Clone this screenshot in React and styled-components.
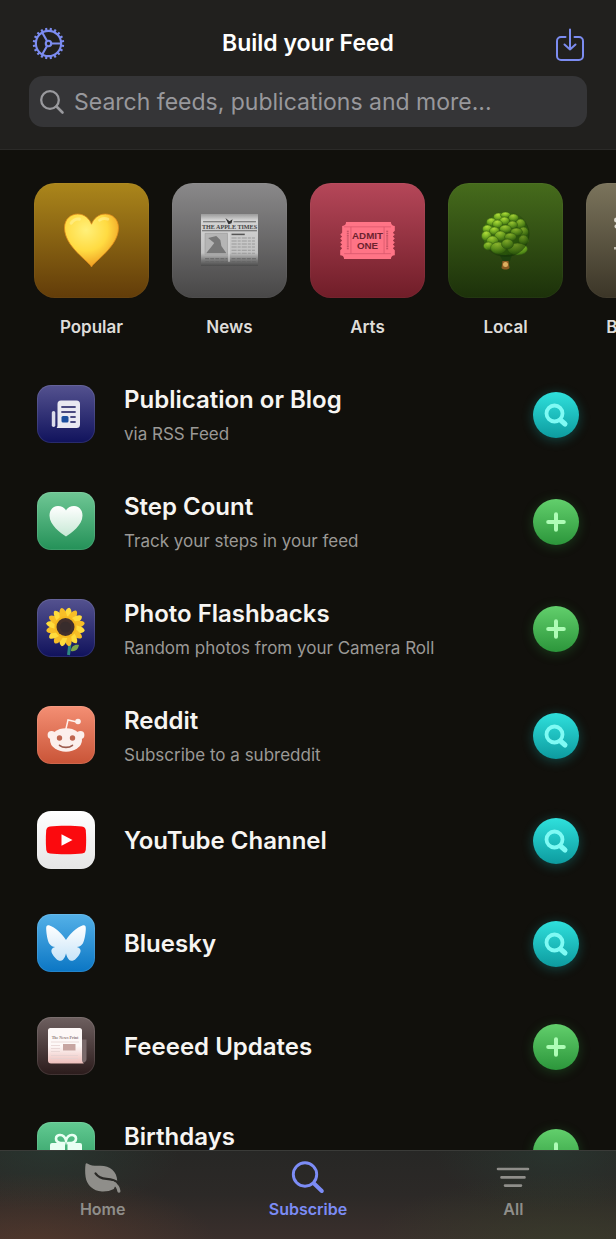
import React from "react";
import styled, { createGlobalStyle } from "styled-components";

const GlobalStyle = createGlobalStyle`
  * { box-sizing: border-box; }
  body { margin: 0; background: #11100c; }
  button, input { font: inherit; }
`;

const Screen = styled.div`
  height: 100vh;
  display: flex;
  flex-direction: column;
  background: #11100c;
  color: #f7f5f2;
  font-family: Inter, "Liberation Sans", sans-serif;
`;

const Header = styled.header`
  flex: none;
  padding: 24px 29px 22px;
  background: #21201e;
  border-bottom: 1px solid #2b2a28;
`;

const TitleBar = styled.div`
  display: flex;
  align-items: center;
  justify-content: space-between;
  height: 38px;
  padding: 0 3px;
  margin-bottom: 14px;
`;

const PageTitle = styled.h1`
  margin: 0;
  font-size: 23px;
  line-height: 30px;
  font-weight: 600;
  color: #ffffff;
`;

const IconButton = styled.button`
  display: flex;
  align-items: center;
  justify-content: ${(p) => p.$align || "center"};
  width: 34px;
  height: 38px;
  padding: 0;
  border: 0;
  background: none;
  color: #7c8cf0;
`;

const SearchBox = styled.label`
  display: flex;
  align-items: center;
  gap: 9px;
  height: 51px;
  padding: 0 10px;
  border-radius: 14px;
  background: #353537;
  color: #9a9a9e;
`;

const SearchInput = styled.input`
  flex: 1;
  min-width: 0;
  padding: 0;
  border: 0;
  outline: 0;
  background: none;
  color: #ffffff;
  font-size: 23px;
  line-height: 30px;
  &::placeholder { color: #98989c; opacity: 1; }
`;

const Content = styled.main`
  flex: 1;
  min-height: 0;
  overflow: hidden auto;
  scrollbar-width: none;
`;

const Topics = styled.nav`
  display: flex;
  gap: 23px;
  padding: 33px 0 22px 34px;
  overflow: auto hidden;
  scrollbar-width: none;
`;

const Topic = styled.a`
  flex: none;
  width: 115px;
  display: flex;
  flex-direction: column;
  align-items: center;
  gap: 17px;
  color: #dedcd9;
  font-size: 17px;
  line-height: 24px;
  font-weight: 600;
  text-decoration: none;
`;

const TopicTile = styled.span`
  display: grid;
  place-items: center;
  width: 115px;
  height: 115px;
  border-radius: 21px;
  background: linear-gradient(${(p) => p.$from}, ${(p) => p.$to});
  box-shadow: inset 0 0 0 1px rgba(255, 255, 255, 0.03);
`;

const SourceList = styled.ul`
  margin: 0;
  padding: 0;
  list-style: none;
`;

const SourceRow = styled.li`
  display: flex;
  align-items: center;
  height: ${(p) => (p.$tall ? 107 : 103)}px;
  padding: 0 37px;
`;

const SourceIcon = styled.span`
  flex: none;
  display: grid;
  place-items: center;
  width: 58px;
  height: 58px;
  margin: 0 29px 2px 0;
  border-radius: 14px;
  overflow: hidden;
  background: linear-gradient(${(p) => p.$from}, ${(p) => p.$to});
  box-shadow: inset 0 0 0 1px rgba(255, 255, 255, 0.1);
`;

const SourceText = styled.div`
  flex: 1;
  min-width: 0;
`;

const SourceTitle = styled.h2`
  margin: 0;
  font-size: 24px;
  line-height: 32px;
  font-weight: 600;
`;

const SourceNote = styled.p`
  margin: 6px 0 0;
  height: 24px;
  font-size: 17px;
  line-height: 24px;
  color: #9b9996;
`;

const palette = {
  search: { from: "#2fe0dc", to: "#0d9b9f", ink: "#7ffaf4", glow: "rgba(20, 200, 200, 0.3)" },
  add: { from: "#62cf6c", to: "#2c963b", ink: "#aefcb6", glow: "rgba(50, 180, 70, 0.26)" },
};

const ActionButton = styled.button`
  flex: none;
  display: grid;
  place-items: center;
  width: 46px;
  height: 46px;
  padding: 0;
  border: 0;
  border-radius: 50%;
  color: ${(p) => palette[p.$kind].ink};
  background: linear-gradient(${(p) => palette[p.$kind].from}, ${(p) => palette[p.$kind].to});
  box-shadow: 0 2px 12px ${(p) => palette[p.$kind].glow};
`;

const TabBar = styled.nav`
  flex: none;
  display: grid;
  grid-template-columns: repeat(3, 1fr);
  height: 89px;
  border-top: 1px solid #3a3b38;
  background:
    radial-gradient(ellipse 180px 75px at 6% 110%, rgba(98, 62, 44, 0.55), transparent),
    radial-gradient(ellipse 130px 60px at 8% 0%, rgba(42, 66, 56, 0.5), transparent),
    radial-gradient(ellipse 200px 75px at 92% 110%, rgba(56, 66, 42, 0.6), transparent),
    radial-gradient(ellipse 120px 60px at 90% 0%, rgba(42, 64, 54, 0.5), transparent),
    linear-gradient(#272725, #2c2927 50%, #3a2f2c);
`;

const Tab = styled.a`
  display: flex;
  flex-direction: column;
  align-items: center;
  gap: 5px;
  padding-top: 9px;
  color: ${(p) => (p.$active ? "#7c8cf6" : "#8f8e8a")};
  font-size: 16px;
  line-height: 20px;
  font-weight: 600;
  text-decoration: none;
`;

function GearIcon() {
  const teeth = Array.from({ length: 20 }, (_, i) => i * 18);
  return (
    <svg width="33" height="33" viewBox="0 0 34 34" fill="none" stroke="currentColor" strokeWidth="2.200" aria-hidden="true">
      <circle cx="17" cy="17" r="13" />
      <circle cx="17" cy="17" r="2.800" />
      <path d="M20 17h10M15.500 14.400l-5-8.700M15.500 19.600l-5 8.700" />
      {teeth.map((a) => (
        <path key={a} d="M30 17h3.200" strokeWidth="2.200" transform={`rotate(${a + 9} 17 17)`} />
      ))}
    </svg>
  );
}

function ImportIcon() {
  return (
    <svg width="28" height="36" viewBox="0 -2 28 36" fill="none" stroke="currentColor" strokeWidth="2" strokeLinecap="round" strokeLinejoin="round" aria-hidden="true">
      <path d="M9.500 10H5a4 4 0 0 0-4 4v15a4 4 0 0 0 4 4h18a4 4 0 0 0 4-4V14a4 4 0 0 0-4-4h-4.500" />
      <path d="M14 2.500v20M8.500 17.500l5.500 5 5.500-5" />
    </svg>
  );
}

function SearchIcon() {
  return (
    <svg width="26" height="26" viewBox="0 0 26 26" fill="none" stroke="currentColor" strokeLinecap="round" aria-hidden="true">
      <circle cx="11" cy="11" r="8.800" strokeWidth="2.300" />
      <path d="M17.500 17.500l6 6" strokeWidth="2.600" />
    </svg>
  );
}

function TabMagnifier() {
  return (
    <svg width="34" height="34" viewBox="0 0 34 34" fill="none" stroke="currentColor" strokeLinecap="round" aria-hidden="true">
      <circle cx="14" cy="14.500" r="11.700" strokeWidth="2.900" />
      <path d="M23 23.500l7.800 7.500" strokeWidth="4" />
    </svg>
  );
}

function ActionMagnifier() {
  return (
    <svg width="26" height="26" viewBox="0 0 26 26" fill="none" stroke="currentColor" strokeLinecap="round" aria-hidden="true">
      <circle cx="11.500" cy="11.500" r="8" strokeWidth="3.800" />
      <path d="M18 18.500l4 3.500" strokeWidth="5" />
    </svg>
  );
}

function PlusIcon() {
  return (
    <svg width="22" height="22" viewBox="0 0 22 22" stroke="currentColor" strokeWidth="4" strokeLinecap="round" aria-hidden="true">
      <path d="M11 3.200v15.600M3.200 11h15.600" />
    </svg>
  );
}

function LeafIcon() {
  return (
    <svg width="38" height="34" viewBox="-1 -3 38 34" fill="none" strokeLinecap="round" aria-hidden="true">
      <path fill="currentColor" d="M.6 1C1 0 2 .1 2.800.8 5.500 3 10 2.800 15.500 2.800 25 3 32 8 32.300 18.500L28.800 26C25.500 27.800 21 28.700 17 28.500 8 28 1.800 22 .6 14 0 9.500 0 5 .6 1z" />
      <path stroke="#2a2926" strokeWidth="2.200" d="M10.500 10.300c2.500 3.700 6.500 5.200 11 5.500 4.500.300 8.500.8 12 4.200" />
      <path stroke="currentColor" strokeWidth="3.200" d="M28 19.800c3.600 2 5.500 4.800 5.900 8.300" />
    </svg>
  );
}

function LinesIcon() {
  return (
    <svg width="34" height="34" viewBox="0 0 34 34" stroke="currentColor" strokeWidth="2.600" strokeLinecap="round" aria-hidden="true">
      <path d="M2 9h30M5.500 17.400h23M9 25.600h16" />
    </svg>
  );
}

function YellowHeart() {
  return (
    <svg width="57" height="57" viewBox="0 0 56 56" aria-hidden="true">
      <defs>
        <radialGradient id="heartFill" cx="40%" cy="30%" r="72%">
          <stop offset="0" stopColor="#fff07a" />
          <stop offset=".55" stopColor="#ffdb42" />
          <stop offset="1" stopColor="#ee9a20" />
        </radialGradient>
      </defs>
      <path fill="url(#heartFill)" stroke="#df8c1c" strokeWidth=".8" d="M28 54C25 48 1.500 34 1.500 15.500 1.500 7 7.500 2 14.500 2 21 2 26 6.500 28 12 30 6.500 35 2 41.500 2 48.500 2 54.500 7 54.500 15.500 54.500 34 31 48 28 54z" />
      <path d="M8 11c2-3 5-4.500 8-4M36 8c2-1.500 5-2 8-1" fill="none" stroke="#fff8b0" strokeWidth="3" strokeLinecap="round" opacity=".45" />
    </svg>
  );
}

function NewspaperTopic() {
  return (
    <svg width="59" height="55" viewBox="0 0 58 54" aria-hidden="true">
      <defs>
        <linearGradient id="paper" x2="0" y2="1">
          <stop offset="0" stopColor="#9a9a9a" />
          <stop offset=".12" stopColor="#d4d4d4" />
          <stop offset=".75" stopColor="#c2c2c2" />
          <stop offset=".9" stopColor="#757575" />
          <stop offset="1" stopColor="#4c4c4c" />
        </linearGradient>
      </defs>
      <path fill="url(#paper)" d="M1 1h56v51H1z" />
      <path d="M3 8.500h22M33 8.500h22M2 17.500h54" stroke="#666" />
      <path d="M25 5l4 3 3-2-1 4-3 1z" fill="#333" />
      <text x="29" y="15.500" textAnchor="middle" fontFamily="Liberation Serif, serif" fontWeight="700" fontSize="6" fill="#444">THE APPLE TIMES</text>
      <path d="M5 20h22v21H5z" fill="#b5b5b5" stroke="#999" strokeWidth=".6" />
      <path d="M6 39.500l5-6 3-4-6-5 8-2 4 4 1 6 5 7z" fill="#777" />
      <path d="M31 21h13" stroke="#555" strokeWidth="1.500" />
      <path d="M31 24.500h23M31 27.500h23M31 30.500h23M31 33.500h23M31 36.500h23M31 39.500h23" stroke="#999" strokeDasharray="5 1 3 1" />
      <path d="M28.500 19v29" stroke="#ddd" strokeWidth="1" />
      <path d="M5 45h22M31 45h24M5 48h22M31 48h24" stroke="#666" strokeDasharray="4 1" />
    </svg>
  );
}

function TicketTopic() {
  return (
    <svg width="57" height="39" viewBox="-1 0 58 40" aria-hidden="true">
      <path fill="#ff7486" d="M4 1h48c0 3 2 4 4 4v5l-2 2 2 2-2 2 2 2-2 2 2 2-2 2 2 2-2 2 2 2v5c-3 0-4 2-4 4H4c0-3-2-4-4-4v-5l2-2-2-2 2-2-2-2 2-2-2-2 2-2-2-2 2-2V5c3 0 4-2 4-4z" />
      <path d="M4 6h48M4 33.500h48M11 6v27.500M45 6v27.500" fill="none" stroke="#d9566b" strokeWidth=".8" />
      <path d="M7.800 10v20M48.200 10v20" stroke="#b84a5c" strokeWidth="2" strokeDasharray="1 1" />
      <g fill="#6c222e" textAnchor="middle" fontFamily="Liberation Sans Narrow, Liberation Sans, sans-serif" fontWeight="700" fontSize="10">
        <text x="28" y="18">ADMIT</text>
        <text x="28" y="29">ONE</text>
      </g>
    </svg>
  );
}

const leaves = [
  [18, 6, 5, 4], [25, 4, 5, 3], [33, 7, 5, 4], [11, 11, 5, 4], [40, 13, 5, 5], [24, 10, 5, 4],
  [17, 13, 5, 4], [32, 14, 5, 4], [7, 18, 5, 4], [43, 21, 5, 5], [25, 18, 6, 4], [14, 20, 5, 4],
  [36, 21, 6, 4], [6, 25, 5, 5], [20, 25, 6, 5], [30, 26, 6, 4], [12, 30, 6, 5], [43, 29, 5, 5],
  [8, 35, 5, 4], [18, 37, 8, 6], [37, 38, 10, 6], [27, 33, 6, 5],
];

function TreeTopic() {
  return (
    <svg width="51" height="60" viewBox="0 0 50 60" aria-hidden="true">
      <defs>
        <radialGradient id="leaf" cx="45%" cy="20%" r="80%">
          <stop offset="0" stopColor="#b0dc3a" />
          <stop offset=".5" stopColor="#7ab324" />
          <stop offset="1" stopColor="#3d7312" />
        </radialGradient>
        <linearGradient id="treeShade" x2="1" y2="1">
          <stop offset=".3" stopColor="#123004" stopOpacity="0" />
          <stop offset="1" stopColor="#123004" stopOpacity=".75" />
        </linearGradient>
      </defs>
      <path d="M17 40h16l-4 11h-6z" fill="#1d400e" />
      <path d="M22 50h6l1 7c-2 2-6 2-8 0z" fill="#8a5c22" />
      <circle cx="25" cy="53.500" r="2.500" fill="#dcb060" />
      <ellipse cx="25" cy="23" rx="23" ry="21" fill="#3a6d10" />
      {leaves.map(([x, y, rx, ry]) => (
        <ellipse key={`${x}-${y}`} cx={x} cy={y} rx={rx} ry={ry} fill="url(#leaf)" stroke="#365f10" strokeWidth=".5" />
      ))}
      <ellipse cx="25" cy="23" rx="24" ry="23" fill="url(#treeShade)" />
    </svg>
  );
}

function BusinessTopic() {
  return (
    <svg width="59" height="56" viewBox="0 0 59 56" fill="#dedbd0" aria-hidden="true">
      <circle cx="2.500" cy="7" r="2.500" />
      <circle cx="2.500" cy="13.500" r="2" />
      <path d="M0 34h7v2.500H0zM10 6h42v36H10z" opacity=".8" />
    </svg>
  );
}

function NewsGlyph() {
  return (
    <svg width="30" height="30" viewBox="0 0 30 30" aria-hidden="true">
      <rect x=".8" y="12" width="3.500" height="16" rx="1.700" fill="#dcdcea" />
      <path d="M10 1.500h15.500a3.500 3.500 0 0 1 3.500 3.500v20.500a3.500 3.500 0 0 1-3.500 3.500H5.500c1-1 1-2 1-4V5A3.500 3.500 0 0 1 10 1.500z" fill="#e9e9f1" />
      <path d="M11 8h13M11 13h13M20 18h4M20 23h4" stroke="#4a4a80" strokeWidth="1.800" strokeLinecap="round" />
      <rect x="10.500" y="17" width="7" height="6.500" rx="1.500" fill="#1c4f9e" />
    </svg>
  );
}

function WhiteHeart() {
  return (
    <svg width="36" height="34" viewBox="0 0 36 34" aria-hidden="true">
      <defs>
        <linearGradient id="whiteHeart" x2="0" y2="1">
          <stop offset="0" stopColor="#ffffff" />
          <stop offset="1" stopColor="#c6e8d4" />
        </linearGradient>
      </defs>
      <path fill="url(#whiteHeart)" d="M18 32.500C13 29 1.500 21.500 1.500 11.500 1.500 5.500 5.500 2 10 2c3.500 0 6.500 1.500 8 4.500C19.500 3.500 22.500 2 26 2c4.500 0 8.500 3.500 8.500 9.500 0 10-11.500 17.500-16.500 21z" />
    </svg>
  );
}

function Sunflower() {
  const petals = Array.from({ length: 16 }, (_, i) => i * 22.5);
  return (
    <svg width="58" height="58" viewBox="0 0 58 58" aria-hidden="true">
      <path d="M33 44l-1.500 12" stroke="#2e8a83" strokeWidth="3" />
      <path d="M34 52c0-5 4-7 8-6-1 5-4 7-8 6z" fill="#7ba54a" />
      {petals.map((a) => (
        <path key={a} d="M24.800 18C24.800 13 26 9 28.500 8.500 31 9 32.200 13 32.200 18z" fill={a % 45 ? "#f7be27" : "#ffdc3c"} transform={`rotate(${a + 11} 28.500 28)`} />
      ))}
      <circle cx="28.500" cy="28" r="11" fill="#f5b81f" />
      <circle cx="28.500" cy="28" r="9" fill="#43302c" />
      <circle cx="28.500" cy="28" r="5.500" fill="#382c2c" />
    </svg>
  );
}

function RedditFace() {
  return (
    <svg width="38" height="36" viewBox="0 0 38 36" aria-hidden="true">
      <path d="M18.500 14l2.500-11 9 2" fill="none" stroke="#fff0ea" strokeWidth="1.500" />
      <g fill="#fcefec">
        <circle cx="31" cy="4.500" r="2.800" />
        <circle cx="4.500" cy="18" r="3.900" />
        <circle cx="33.500" cy="18" r="3.900" />
        <ellipse cx="19" cy="23" rx="16" ry="11.800" />
      </g>
      <g fill="#bf6650">
        <circle cx="12.500" cy="21" r="2.700" />
        <circle cx="25.500" cy="21" r="2.700" />
      </g>
      <path d="M12.500 28.300c3.500 2.700 9.500 2.700 13 0" fill="none" stroke="#9c5a4c" strokeWidth="1.600" strokeLinecap="round" />
    </svg>
  );
}

function YouTubeMark() {
  return (
    <svg width="42" height="30" viewBox="0 0 42 30" aria-hidden="true">
      <path d="M5 1.500C12 .5 30 .5 37 1.500c2.500.4 3.500 1.500 3.800 4 .5 6 .5 13 0 19-.3 2.500-1.300 3.600-3.800 4-7 1-25 1-32 0-2.500-.4-3.500-1.500-3.800-4-.5-6-.5-13 0-19 .3-2.500 1.300-3.600 3.800-4z" fill="#fb0a0e" />
      <path d="M16.500 9.200l11 5.800-11 5.800z" fill="#ffffff" />
    </svg>
  );
}

function Butterfly() {
  return (
    <svg width="42" height="38" viewBox="-1 -1 42 38" aria-hidden="true">
      <defs>
        <linearGradient id="wings" x2="0" y2="1">
          <stop offset="0" stopColor="#ffffff" />
          <stop offset="1" stopColor="#c8e4f8" />
        </linearGradient>
      </defs>
      <path fill="url(#wings)" d="M20 15C17 10 9 2 3 .3.500 0 0 1.500.2 4.500c.3 5 1.300 11 3 14 1.500 2.500 4 3.500 6 3.500-4 1-4.800 4-2.500 7.500 2 3.200 4.700 6.500 8 6.300 3-.2 4.600-4.500 5.300-7.500.7 3 2.300 7.300 5.300 7.500 3.300.2 6-3.100 8-6.300 2.300-3.500 1.500-6.500-2.500-7.500 2 0 4.500-1 6-3.500 1.700-3 2.700-9 3-14C40 1.500 39.500 0 37 .3 31 2 23 10 20 15z" />
    </svg>
  );
}

function PaperGlyph() {
  return (
    <svg width="42" height="38" viewBox="0 0 42 38" aria-hidden="true">
      <defs>
        <linearGradient id="pinkPaper" x2="0" y2="1">
          <stop offset=".5" stopColor="#fdf8f7" />
          <stop offset="1" stopColor="#eebfbb" />
        </linearGradient>
      </defs>
      <path d="M36 12.500h5.500V32c0 3-3 4-5 4z" fill="#79696a" />
      <path d="M3 3.500A2.500 2.500 0 0 1 5.500 1h29A2.500 2.500 0 0 1 37 3.500V33c0 2 1 3 2 3.500H6a3 3 0 0 1-3-3z" fill="url(#pinkPaper)" />
      <text x="20" y="12" textAnchor="middle" fontFamily="Liberation Serif, serif" fontWeight="700" fontSize="4" fill="#8f7c7c">The News Print</text>
      <path d="M6 15h28M6 18.500h9M6 21.500h9M6 24.500h9M6 28.500h27M6 31.500h27" stroke="#e4d2d0" strokeWidth=".8" />
      <path d="M18 17h12.500v6.500H18z" fill="#c7a5a1" />
    </svg>
  );
}

function GiftGlyph() {
  return (
    <svg width="34" height="36" viewBox="0 0 34 36" fill="#e9fff3" aria-hidden="true">
      <path d="M16 10c-5 .5-9-.5-9-4.500C7 1 15 0 17 7.500 19 0 27 1 27 5.500c0 4-4 5-9 4.500" fill="none" stroke="#e9fff3" strokeWidth="2.600" />
      <path d="M3 10h13v9H1v-7a2 2 0 0 1 2-2zM18.500 10H31a2 2 0 0 1 2 2v7H18.500zM3 21h13v13H6a3 3 0 0 1-3-3zM18.500 21H31v10a3 3 0 0 1-3 3h-9.500z" />
    </svg>
  );
}

const topics = [
  { name: "Popular", from: "#ab861b", to: "#623c09", art: <YellowHeart /> },
  { name: "News", from: "#8a898a", to: "#484747", art: <NewspaperTopic /> },
  { name: "Arts", from: "#b54759", to: "#701d28", art: <TicketTopic /> },
  { name: "Local", from: "#466b1c", to: "#1c310a", art: <TreeTopic /> },
  { name: "Business", from: "#7b745c", to: "#3b3527", art: <BusinessTopic /> },
];

const sources = [
  { title: "Publication or Blog", note: "via RSS Feed", kind: "search", from: "#54528f", to: "#10125c", art: <NewsGlyph /> },
  { title: "Step Count", note: "Track your steps in your feed", kind: "add", from: "#6fc795", to: "#249158", art: <WhiteHeart /> },
  { title: "Photo Flashbacks", note: "Random photos from your Camera Roll", kind: "add", from: "#54528f", to: "#10125c", art: <Sunflower /> },
  { title: "Reddit", note: "Subscribe to a subreddit", kind: "search", from: "#f48f74", to: "#c95437", art: <RedditFace /> },
  { title: "YouTube Channel", kind: "search", from: "#ffffff", to: "#e5e5e5", art: <YouTubeMark /> },
  { title: "Bluesky", kind: "search", from: "#54b1e8", to: "#0b76c4", art: <Butterfly /> },
  { title: "Feeeed Updates", kind: "add", from: "#6e6060", to: "#2b1b1b", art: <PaperGlyph /> },
  { title: "Birthdays", note: "", kind: "add", from: "#62ca92", to: "#249158", art: <GiftGlyph /> },
];

export default function App() {
  return (
    <Screen>
      <GlobalStyle />
      <Header>
        <TitleBar>
          <IconButton type="button" aria-label="Settings" $align="flex-start"><GearIcon /></IconButton>
          <PageTitle>Build your Feed</PageTitle>
          <IconButton type="button" aria-label="Import" $align="flex-end"><ImportIcon /></IconButton>
        </TitleBar>
        <SearchBox>
          <SearchIcon />
          <SearchInput type="text" aria-label="Search feeds" placeholder="Search feeds, publications and more..." />
        </SearchBox>
      </Header>
      <Content>
        <Topics aria-label="Topics">
          {topics.map((t) => (
            <Topic href="#" key={t.name}>
              <TopicTile $from={t.from} $to={t.to}>{t.art}</TopicTile>
              {t.name}
            </Topic>
          ))}
        </Topics>
        <SourceList>
          {sources.map((s) => (
            <SourceRow key={s.title} $tall={s.note !== undefined}>
              <SourceIcon $from={s.from} $to={s.to}>{s.art}</SourceIcon>
              <SourceText>
                <SourceTitle>{s.title}</SourceTitle>
                {s.note !== undefined && <SourceNote>{s.note}</SourceNote>}
              </SourceText>
              <ActionButton type="button" $kind={s.kind} aria-label={s.kind === "add" ? `Add ${s.title}` : `Search ${s.title}`}>
                {s.kind === "add" ? <PlusIcon /> : <ActionMagnifier />}
              </ActionButton>
            </SourceRow>
          ))}
        </SourceList>
      </Content>
      <TabBar aria-label="Main">
        <Tab href="#"><LeafIcon />Home</Tab>
        <Tab href="#" $active aria-current="page"><TabMagnifier />Subscribe</Tab>
        <Tab href="#"><LinesIcon />All</Tab>
      </TabBar>
    </Screen>
  );
}
